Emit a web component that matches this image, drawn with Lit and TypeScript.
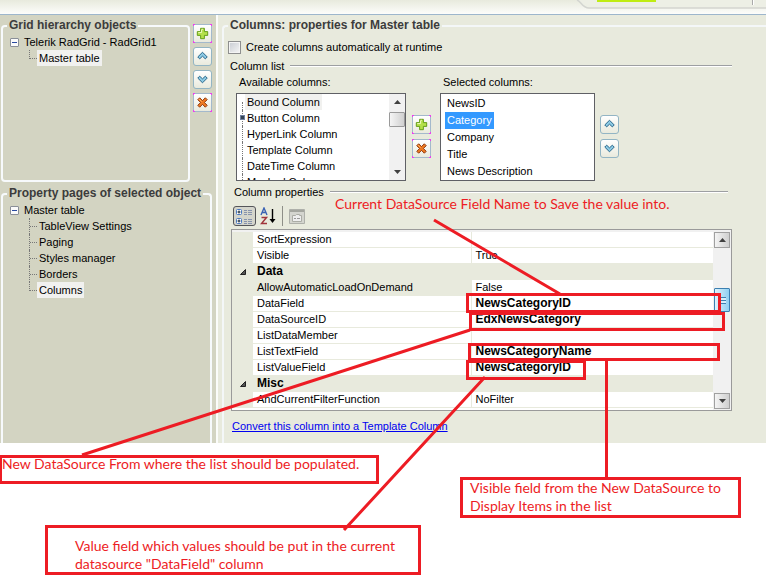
import { LitElement, html, css, svg, nothing } from "lit";
import { customElement, property } from "lit/decorators.js";
import { classMap } from "lit/directives/class-map.js";

type IconName = "add" | "remove" | "up" | "down";

const ICONS = {
  add: svg`<path d="M7 3.5h4v3.500h3.500v4H11v3.500H7V11H3.500V7H7z" fill="#b4e04a" stroke="#5f9a12" stroke-width="1"/><path d="M8 4.500h1.500M4.500 8H8V5" stroke="#eefbc0" fill="none"/>`,
  remove: svg`<path d="M4 6l2-2 3 3 3-3 2 2-3 3 3 3-2 2-3-3-3 3-2-2 3-3z" fill="#ee7a22" stroke="#8a3208" stroke-width="1"/><path d="M5.500 5.500L8 8" stroke="#ffc070"/>`,
  up: svg`<path d="M9 4.500l5 5-2 2L9 8.700l-3 2.800-2-2z" fill="#8ecbe4" stroke="#1f5f86" stroke-width="1"/>`,
  down: svg`<path d="M9 12.500l-5-5 2-2 3 2.800 3-2.800 2 2z" fill="#8ecbe4" stroke="#1f5f86" stroke-width="1"/>`,
};

@customElement("tool-button")
class ToolButton extends LitElement {
  @property() icon: IconName = "add";
  @property() label = "";

  static styles = css`
    :host { display: block; width: 19px; height: 19px; }
    .btn {
      display: block; box-sizing: border-box; width: 19px; height: 19px; padding: 0;
      border: 1px solid #93b5c4; border-radius: 3px;
      background: linear-gradient(#ffffff, #e9eadd);
    }
    .corners { border-radius: 0; border-color: #a3b9cc; }
    svg { display: block; width: 17px; height: 17px; }
    .pink { fill: #f03cf0; }
  `;

  render() {
    const corners = this.icon === "add" || this.icon === "remove";
    return html`<button class=${classMap({ btn: true, corners })} aria-label=${this.label}>
      <svg viewBox="0 0 18 18" overflow="visible" aria-hidden="true">
        ${ICONS[this.icon]}
        ${corners
          ? svg`<path class="pink" d="M-1-1h2v1H0v1h-1zM19-1h-2v1h1v1h1zM-1 19h2v-1H0v-1h-1zM19 19h-2v-1h1v-1h1z"/>`
          : nothing}
      </svg>
    </button>`;
  }
}

@customElement("scroll-track")
class ScrollTrack extends LitElement {
  static styles = css`
    :host { display: flex; flex-direction: column; width: 16px; background: #f1f1f1; }
    button {
      display: block; box-sizing: border-box; width: 16px; height: 16px; flex: none; padding: 0;
      border: 0; background: transparent;
    }
    :host([framed]) button { border: 1px solid #a0a0a0; background: linear-gradient(90deg, #f4f4f4, #cfcfcf); }
    svg { display: block; margin: auto; width: 7px; height: 4px; }
    .track { flex: 1; display: flex; flex-direction: column; }
    .lead { height: 2px; }
    .thumb {
      box-sizing: border-box; height: 15px; border: 1px solid #9a9a9a; border-radius: 1px;
      background: linear-gradient(90deg, #f5f5f5, #d0d0d0);
    }
    :host([framed]) .lead { height: 40px; }
    :host([framed]) .thumb {
      height: 24px; border-color: #3c7fb1; display: flex; align-items: center; justify-content: center;
      background: linear-gradient(90deg, #dff2fc, #8fd0f2);
    }
    .grip { display: none; width: 7px; height: 7px; background: repeating-linear-gradient(#3c7fb1 0 1px, #d8effa 1px 3px); }
    :host([framed]) .grip { display: block; }
  `;

  render() {
    return html`
      <button aria-label="Scroll up"><svg viewBox="0 0 7 4"><path d="M0 4L3.500 0 7 4z" fill="#404040"/></svg></button>
      <div class="track"><div class="lead"></div><div class="thumb"><span class="grip"></span></div></div>
      <button aria-label="Scroll down"><svg viewBox="0 0 7 4"><path d="M0 0h7L3.500 4z" fill="#404040"/></svg></button>
    `;
  }
}

interface Row { name: string; value?: string; kind?: "category" | "current"; bold?: boolean }

const ROWS: Row[] = [
  { name: "SortExpression" },
  { name: "Visible", value: "True" },
  { name: "Data", kind: "category" },
  { name: "AllowAutomaticLoadOnDemand", value: "False", kind: "current" },
  { name: "DataField", value: "NewsCategoryID", bold: true },
  { name: "DataSourceID", value: "EdxNewsCategory", bold: true },
  { name: "ListDataMember" },
  { name: "ListTextField", value: "NewsCategoryName", bold: true },
  { name: "ListValueField", value: "NewsCategoryID", bold: true },
  { name: "Misc", kind: "category" },
  { name: "AndCurrentFilterFunction", value: "NoFilter" },
];

@customElement("property-grid")
class PropertyGrid extends LitElement {
  static styles = css`
    :host {
      display: flex; height: 182px; box-sizing: border-box; overflow: hidden;
      border: 1px solid #9a9a9a; padding: 2px 1px 0 0; background: #f1f1f1;
      font: 11px/15px "Liberation Sans", Arial, sans-serif; color: #000;
    }
    .cells { flex: 1; min-width: 0; background: #fff; }
    table { width: 100%; border-collapse: collapse; table-layout: fixed; }
    .gutter { width: 21px; }
    .name { width: 218px; }
    td, th {
      height: 15px; padding: 0 0 0 4px; border-bottom: 1px solid #e8eadd; background: #fff;
      font-weight: normal; text-align: left; white-space: nowrap;
    }
    th.label { border-right: 1px solid #e8eadd; }
    th.mark, tr.category th, tr.current th { background: #e8eadd; }
    th.mark { padding: 0; }
    tr.category th.label { font-weight: bold; font-size: 12px; }
    td.bold { font-weight: bold; font-size: 12px; }
    .fold { display: flex; align-items: center; justify-content: center; width: 21px; height: 15px; padding: 0; border: 0; background: none; }
    .fold svg { width: 6px; height: 6px; }
    scroll-track { margin: 0 0 1px 1px; }
  `;

  render() {
    return html`
      <div class="cells"><table>
        <colgroup><col class="gutter"><col class="name"><col></colgroup>
        ${ROWS.map((r) => html`<tr class=${r.kind ?? ""}>
          <th class="mark">${r.kind === "category"
            ? html`<button class="fold" aria-label="Collapse ${r.name}"><svg viewBox="0 0 6 6"><path d="M5.500 0.500v5h-5z" fill="#555" stroke="#222"/></svg></button>`
            : nothing}</th>
          ${r.kind === "category"
            ? html`<th class="label" colspan="2">${r.name}</th>`
            : html`<th class="label" scope="row">${r.name}</th><td class=${r.bold ? "bold" : ""}>${r.value ?? ""}</td>`}
        </tr>`)}
      </table></div>
      <scroll-track framed></scroll-track>
    `;
  }
}

@customElement("app-root")
class AppRoot extends LitElement {
  static styles = css`
    :host {
      display: block; position: relative; min-height: 100vh; overflow: hidden; background: #fff;
      font: 11px/16px "Liberation Sans", Arial, sans-serif; color: #000;
    }
    button { font: inherit; color: inherit; }
    ul { list-style: none; margin: 0; padding: 0; }

    .top {
      display: flex; justify-content: flex-end; height: 14px; border-bottom: 1px solid #9db6cc;
      background: linear-gradient(#e8eadd, #fdfdfb);
    }
    .top svg { display: block; width: 191px; height: 14px; }

    .designer { display: flex; height: 428px; background: #e8eadd; }
    .side {
      box-sizing: border-box; width: 218px; flex: none; display: flex; flex-direction: column; gap: 4px;
      padding: 3px 0 0 1px; background: #d3d4c2; border-right: 2px solid #fbfcfa;
    }
    .side-top { display: flex; gap: 3px; }
    fieldset { box-sizing: border-box; min-width: 0; margin: 0; padding: 0; border: 2px solid #f7fafc; border-radius: 4px; }
    legend { margin-left: 4px; padding: 0 2px; font-weight: bold; font-size: 12px; line-height: 15px; color: #3c3c3c; white-space: nowrap; }
    .objects { width: 189px; height: 164px; }
    .pages { width: 211px; flex: 1; border-bottom: 0; border-radius: 4px 4px 0 0; }
    .stack { display: flex; flex-direction: column; gap: 4px; padding-top: 6px; }

    .tree { padding: 1px 0 0 7px; }
    .root { display: flex; align-items: center; height: 16px; }
    .expander {
      width: 9px; height: 9px; box-sizing: border-box; padding: 0; border: 1px solid #8a8f98; border-radius: 1px;
      display: flex; align-items: center; justify-content: center; background: #fbfbfb;
    }
    .expander::before { content: ""; width: 5px; height: 1px; background: #2a4aa0; }
    .item { display: block; height: 16px; padding: 0 2px; border: 0; background: none; line-height: 16px; white-space: nowrap; }
    .root .item { margin-left: 3px; }
    .tree li li { display: flex; margin-left: 19px; }
    .branch {
      width: 7px; height: 16px; flex: none; border-left: 1px dotted #777;
      background: repeating-linear-gradient(90deg, #777 0 1px, transparent 1px 2px) 0 8px / 7px 1px no-repeat;
    }
    .tree li li:last-child .branch { height: 8px; border-bottom: 1px dotted #777; background: none; }
    .current { background: #f1f1ef; }

    .main { flex: 1; min-width: 0; margin-left: 4px; padding-top: 3px; display: flex; }
    .props { flex: 1; border-width: 2px 0 0 2px; border-color: #f4f7f8; border-radius: 4px 0 0 0; }
    .props > legend { margin-left: 4px; }
    .body { padding: 6px 34px 0 4px; }
    .check { display: flex; align-items: center; gap: 5px; height: 16px; }
    .check input {
      appearance: none; box-sizing: border-box; width: 13px; height: 13px; margin: 0; border: 1px solid #8e8f8f;
      background: linear-gradient(135deg, #c8ccd2, #f6f6f6); outline: 1px solid #f4f4f4; outline-offset: -2px;
    }
    .section { display: flex; align-items: center; gap: 6px; margin: 3px 0 0; padding-left: 2px; font-weight: normal; font-size: 11px; }
    .section::after { content: ""; flex: 1; height: 1px; background: #9d9fa2; border-bottom: 1px solid #fff; }
    .second { padding: 0 4px 0 6px; }
    .lists { display: flex; gap: 6px; padding-left: 8px; }
    .caption { padding-left: 3px; height: 19px; line-height: 16px; }
    .side-buttons { display: flex; flex-direction: column; gap: 5px; padding-top: 41px; }
    .box { display: flex; box-sizing: border-box; height: 88px; border: 1px solid #5f6065; background: #fff; overflow: hidden; }
    .available { width: 170px; }
    .available ul { flex: 1; }
    .available li { display: flex; height: 16px; padding-left: 5px; }
    .stem { width: 2px; height: 16px; flex: none; border-left: 1px dotted #777; position: relative; }
    .available li:first-child .stem { height: 8px; margin-top: 8px; }
    .plus { width: 5px; height: 5px; box-sizing: border-box; padding: 0; border: 1px solid #7080a0; background: #345; position: absolute; top: 5px; left: -3px; }
    .selected { width: 155px; padding: 1px 0 0 4px; }
    .selected .item { height: 17px; line-height: 17px; }
    .selected .picked { background: #3399ff; color: #fff; }
    .picker { margin-left: 3px; }
    .order { margin-left: -1px; }

    .tools { display: flex; align-items: center; gap: 4px; height: 20px; margin: 6px 0 3px 5px; }
    .tools button { display: block; padding: 0; border: 0; background: none; }
    .tools svg { display: block; }
    .sep { width: 1px; height: 20px; margin: 0 2px; background: #8e8f88; }
    .grid { margin: 0 0 7px 3px; }
    .convert { margin-left: 4px; color: #0000f0; }

    .marks { position: absolute; top: 0; left: 0; width: 766px; height: 576px; pointer-events: none; fill: none; stroke: #ed1c24; stroke-width: 3px; }
    .note { position: absolute; margin: 0; font: 14px/18px Lato, "Open Sans", sans-serif; color: #ed1c24; white-space: nowrap; }
    .note-field { left: 335px; top: 195px; }
    .note-source { left: 2px; top: 455px; }
    .note-visible { left: 470px; top: 479px; }
    .note-value { left: 75px; top: 537px; }
  `;

  private tree(root: string, items: string[], current: string) {
    return html`<ul class="tree"><li>
      <div class="root"><button class="expander" aria-label="Collapse ${root}"></button><button class="item">${root}</button></div>
      <ul>${items.map((t) => html`<li><span class="branch"></span><button class=${classMap({ item: true, current: t === current })}>${t}</button></li>`)}</ul>
    </li></ul>`;
  }

  render() {
    const available = ["Bound Column", "Button Column", "HyperLink Column", "Template Column", "DateTime Column", "Masked Column"];
    const selected = ["NewsID", "Category", "Company", "Title", "News Description"];
    return html`
      <header class="top">
        <svg viewBox="0 0 191 14" aria-hidden="true">
          <path d="M2 0c4 1 5 8 12 8h177V0z" fill="#edefe5"/>
          <path d="M2 0c4 1 5 8 12 8h177" fill="none" stroke="#d3d5d0" stroke-width="1.500"/>
          <path d="M22 0h59v2H22z" fill="#bfec12"/>
          <path d="M177.500 0v5" stroke="#aaa"/><path d="M178.500 0v5" stroke="#fff"/>
        </svg>
      </header>

      <div class="designer">
        <aside class="side">
          <div class="side-top">
            <fieldset class="objects"><legend>Grid hierarchy objects</legend>
              ${this.tree("Telerik RadGrid - RadGrid1", ["Master table"], "Master table")}
            </fieldset>
            <div class="stack">
              <tool-button icon="add" label="Add"></tool-button>
              <tool-button icon="up" label="Move up"></tool-button>
              <tool-button icon="down" label="Move down"></tool-button>
              <tool-button icon="remove" label="Remove"></tool-button>
            </div>
          </div>
          <fieldset class="pages"><legend>Property pages of selected object</legend>
            ${this.tree("Master table", ["TableView Settings", "Paging", "Styles manager", "Borders", "Columns"], "Columns")}
          </fieldset>
        </aside>

        <main class="main">
          <fieldset class="props"><legend>Columns: properties for Master table</legend>
            <div class="body">
              <label class="check"><input type="checkbox">Create columns automatically at runtime</label>
              <h2 class="section">Column list</h2>
              <div class="lists">
                <div>
                  <div class="caption">Available columns:</div>
                  <div class="box available">
                    <ul>${available.map((t, i) => html`<li><span class="stem">${t === "Button Column"
                      ? html`<button class="plus" aria-label="Expand ${t}"></button>` : nothing}</span><button class=${classMap({ item: true, current: i === 0 })}>${t}</button></li>`)}</ul>
                    <scroll-track></scroll-track>
                  </div>
                </div>
                <div class="side-buttons">
                  <tool-button icon="add" label="Add column"></tool-button>
                  <tool-button icon="remove" label="Remove column"></tool-button>
                </div>
                <div class="picker">
                  <div class="caption">Selected columns:</div>
                  <div class="box selected">
                    <ul>${selected.map((t) => html`<li><button class=${classMap({ item: true, picked: t === "Category" })}>${t}</button></li>`)}</ul>
                  </div>
                </div>
                <div class="side-buttons order">
                  <tool-button icon="up" label="Move column up"></tool-button>
                  <tool-button icon="down" label="Move column down"></tool-button>
                </div>
              </div>

              <h2 class="section second">Column properties</h2>
              <div class="tools">
                <button aria-label="Categorized" aria-pressed="true">
                  <svg width="23" height="20" viewBox="0 0 23 20"><rect x=".5" y=".5" width="22" height="19" rx="2.500" fill="#d4d5cc" stroke="#55565a"/>
                    <g fill="#fff" stroke="#4a78c0"><rect x="3.500" y="3.500" width="5" height="5" rx="1"/><rect x="3.500" y="12.500" width="5" height="5" rx="1"/></g>
                    <path d="M4.500 6h3M6 4.500v3M4.500 15h3M6 13.500v3" stroke="#123"/>
                    <path d="M11 4.500h3m1 0h4M11 6.500h3m1 0h4M11 8.500h3m1 0h4M11 13.500h3m1 0h4M11 15.500h3m1 0h4M11 17.500h3m1 0h4" stroke="#8793ad"/></svg>
                </button>
                <button aria-label="Alphabetical">
                  <svg width="16" height="18" viewBox="0 0 16 18" fill="none"><path d="M1 8l3-7 3 7M2 5.500h4" stroke="#3a62b4" stroke-width="1.400"/><path d="M1.500 10.500h5l-5 6h5.500" stroke="#a0343c" stroke-width="1.500"/><path d="M12.500 2v12" stroke="#000" stroke-width="1.400"/><path d="M9.500 12h6l-3 4z" fill="#000"/></svg>
                </button>
                <span class="sep"></span>
                <button aria-label="Property pages" disabled>
                  <svg width="16" height="15" viewBox="0 0 16 15"><path d="M.5.5h15v14H.5z" fill="#d4d5cf" stroke="#aeb0aa"/><path d="M1 2h14" stroke="#a4a69f" stroke-width="2"/><path d="M3.500 6.500h3l1-1h3v1h2v6h-9z" fill="#eee" stroke="#aaaca5"/><path d="M5 9.500h2m1 0h3" stroke="#999"/></svg>
                </button>
              </div>
              <property-grid class="grid"></property-grid>
              <a class="convert" href="#template">Convert this column into a Template Column</a>
            </div>
          </fieldset>
        </main>
      </div>

      <svg class="marks" viewBox="0 0 766 576" aria-hidden="true">
        <rect x="467.500" y="294.500" width="252" height="17"/>
        <rect x="470.500" y="313.500" width="253" height="16"/>
        <rect x="469.500" y="344.500" width="249" height="15"/>
        <rect x="467.500" y="361.500" width="117" height="17"/>
        <rect x="0.500" y="456.500" width="377" height="26"/>
        <rect x="46.500" y="526.500" width="373" height="47"/>
        <rect x="461.500" y="478.500" width="278" height="38"/>
        <path d="M434 220L560 294M470 330L82 455M606.500 361v117M485 377L344 530"/>
      </svg>
      <p class="note note-field">Current DataSource Field Name to Save the value into.</p>
      <p class="note note-source">New DataSource From where the list should be populated.</p>
      <p class="note note-visible">Visible field from the New DataSource to<br>Display Items in the list</p>
      <p class="note note-value">Value field which values should be put in the current<br>datasource "DataField" column</p>
    `;
  }
}
